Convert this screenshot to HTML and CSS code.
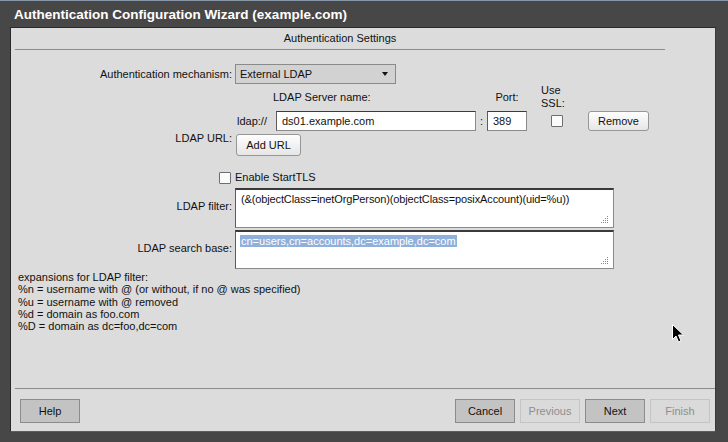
FILE: index.html
```html
<!DOCTYPE html>
<html>
<head>
<meta charset="utf-8">
<link rel="stylesheet" href="styles.css">
</head>
<body>
<div class="window">
  <div class="titlebar">Authentication Configuration Wizard (example.com)</div>
  <div class="panel">
    <div class="section-title">Authentication Settings</div>
    <div class="form">
      <div class="lbl">Authentication mechanism:</div>
      <div class="select"><span>External LDAP</span><span class="arrow"></span></div>

      <div class="lbl lbl-url">LDAP URL:</div>
      <div class="url-block">
        <div class="url-grid">
          <div class="h-server">LDAP Server name:</div>
          <div class="h-port">Port:</div>
          <div class="h-ssl">Use<br>SSL:</div>
          <div class="proto">ldap://</div>
          <div class="input host">ds01.example.com</div>
          <div class="colon">:</div>
          <div class="input port">389</div>
          <div class="cb ssl-cb"></div>
          <button class="btn-light remove">Remove</button>
        </div>
        <button class="btn-light add">Add URL</button>
      </div>

      <div class="tls-cell"><span class="cb"></span></div>
      <div class="tls-text">Enable StartTLS</div>

      <div class="lbl">LDAP filter:</div>
      <div class="textarea filter">(&amp;(objectClass=inetOrgPerson)(objectClass=posixAccount)(uid=%u))<svg class="grip" width="8" height="8" viewBox="0 0 8 8"><rect x="6" y="0" width="1" height="1"/><rect x="4" y="2" width="1" height="1"/><rect x="6" y="2" width="1" height="1"/><rect x="2" y="4" width="1" height="1"/><rect x="4" y="4" width="1" height="1"/><rect x="6" y="4" width="1" height="1"/><rect x="0" y="6" width="1" height="1"/><rect x="2" y="6" width="1" height="1"/><rect x="4" y="6" width="1" height="1"/><rect x="6" y="6" width="1" height="1"/></svg></div>

      <div class="lbl">LDAP search base:</div>
      <div class="textarea base"><span class="sel">cn=users,cn=accounts,dc=example,dc=com</span><svg class="grip" width="8" height="8" viewBox="0 0 8 8"><rect x="6" y="0" width="1" height="1"/><rect x="4" y="2" width="1" height="1"/><rect x="6" y="2" width="1" height="1"/><rect x="2" y="4" width="1" height="1"/><rect x="4" y="4" width="1" height="1"/><rect x="6" y="4" width="1" height="1"/><rect x="0" y="6" width="1" height="1"/><rect x="2" y="6" width="1" height="1"/><rect x="4" y="6" width="1" height="1"/><rect x="6" y="6" width="1" height="1"/></svg></div>
    </div>

    <div class="help">
      <div>expansions for LDAP filter:</div>
      <div>%n = username with @ (or without, if no @ was specified)</div>
      <div>%u = username with @ removed</div>
      <div>%d = domain as foo.com</div>
      <div>%D = domain as dc=foo,dc=com</div>
    </div>

    <div class="footer">
      <button class="btn">Help</button>
      <div class="nav">
        <button class="btn">Cancel</button>
        <button class="btn disabled">Previous</button>
        <button class="btn">Next</button>
        <button class="btn disabled">Finish</button>
      </div>
    </div>
  </div>
</div>
<svg class="cursor" width="14" height="20" viewBox="0 0 14 20">
  <path d="M0.5 0.5 L0.5 15.5 L4 12 L6.5 18 L9 17 L6.5 11 L11.5 11 Z" fill="#000" stroke="#fff" stroke-width="1"/>
</svg>
</body>
</html>
```

FILE: styles.css
```css
* { box-sizing: border-box; }

body {
  margin: 0;
  width: 728px;
  height: 442px;
  overflow: hidden;
  background: #474747;
  font-family: "Liberation Sans", Arial, sans-serif;
  font-size: 11px;
  color: #111;
  position: relative;
}

.window {
  height: 442px;
  border-top: 1px solid #8797a8;
  display: flex;
  flex-direction: column;
}

.titlebar {
  height: 26px;
  padding: 2px 0 0 14px;
  line-height: 24px;
  color: #fff;
  font-weight: bold;
  font-size: 13.5px;
}

.panel {
  flex: 1;
  margin: 0 12px 10px 10px;
  background: #dcdcdc;
  border: 1px solid;
  border-color: #2a2a2a #3a3a3a #5e5e5e #2a2a2a;
  display: flex;
  flex-direction: column;
}

.section-title {
  width: 650px;
  margin-left: 4px;
  text-align: center;
  padding: 4px 0 4px;
  line-height: 13px;
  border-bottom: 1px solid #8c8c8c;
}

.form {
  display: grid;
  grid-template-columns: 217px 379px;
  column-gap: 3px;
  margin: 14px 0 0 4px;
}

.lbl {
  text-align: right;
  align-self: center;
  line-height: 13px;
}

.lbl-url {
  align-self: end;
  margin-bottom: 11px;
}

.select {
  width: 161px;
  height: 20px;
  background: #d2d2d2;
  border: 1px solid #8a8a8a;
  display: flex;
  align-items: center;
  justify-content: space-between;
  padding: 0 7px 0 4px;
}

.arrow {
  width: 0;
  height: 0;
  border-left: 3.5px solid transparent;
  border-right: 3.5px solid transparent;
  border-top: 4px solid #111;
}

.url-grid {
  display: grid;
  grid-template-columns: 41px 200px 11px 40px 60px 62px;
  grid-template-rows: 26px 20px;
  row-gap: 1px;
  line-height: 13px;
}

.h-server { grid-column: 2; grid-row: 1; align-self: center; margin-left: -3px; }
.h-port { grid-column: 4; grid-row: 1; align-self: center; text-align: center; }
.h-ssl { grid-column: 5; grid-row: 1; align-self: center; padding-left: 14px; }

.proto { grid-column: 1; grid-row: 2; align-self: center; padding-left: 2px; }
.host { grid-column: 2; grid-row: 2; }
.colon { grid-column: 3; grid-row: 2; align-self: center; text-align: center; }
.port { grid-column: 4; grid-row: 2; }
.ssl-cb { grid-column: 5; grid-row: 2; align-self: center; margin-left: 24px; }
.remove { grid-column: 6; grid-row: 2; margin-left: 1px; width: 61px; }

.input {
  height: 20px;
  background: #fff;
  border: 1px solid #8a8a8a;
  border-top-color: #3c3c3c;
  border-left-color: #5c5c5c;
  padding: 0 5px;
  line-height: 18px;
}

.cb {
  display: block;
  width: 12px;
  height: 12px;
  background: #fbfbfb;
  border: 1px solid #6e6e6e;
  border-radius: 1px;
}

.btn-light {
  height: 20px;
  font: inherit;
  color: #111;
  background: linear-gradient(#fefefe, #e6e6e6);
  border: 1px solid #979797;
  border-radius: 3px;
  padding: 0;
}

.add {
  display: block;
  width: 65px;
  height: 22px;
  margin: 3px 0 0 1px;
}

.tls-cell {
  margin-top: 14px;
  height: 14px;
  display: flex;
  justify-content: flex-end;
  align-items: flex-end;
  padding-right: 1px;
}

.tls-text {
  margin-top: 14px;
  height: 14px;
  line-height: 14px;
}

.textarea {
  position: relative;
  background: #fff;
  border: 1px solid #8a8a8a;
  border-top: 2px solid #3a3a3a;
  border-left-color: #5a5a5a;
  padding: 2px 5px;
  line-height: 14px;
}

.filter { height: 40px; margin-top: 4px; letter-spacing: -0.13px; }
.base { height: 39px; margin-top: 2px; padding-left: 4px; }

.sel {
  background: #8fb0da;
  color: #fff;
  padding: 0 1px;
}

.grip {
  position: absolute;
  right: 4px;
  bottom: 3px;
  fill: #8a8a8a;
}

.help {
  padding-left: 7px;
  margin-top: 2px;
  line-height: 12.25px;
}

.footer {
  margin: auto 0 0 4px;
  border-top: 1px solid #8c8c8c;
  padding: 10px 5px 8px 5px;
  display: flex;
}

.nav {
  margin-left: auto;
  display: flex;
  gap: 5px;
}

.btn {
  width: 60px;
  height: 24px;
  font: inherit;
  color: #111;
  background: #c3c3c3;
  border: 1px solid #8c8c8c;
  padding: 0;
}

.btn.disabled {
  background: #dadada;
  border-color: #c4c4c4;
  color: #8e8e8e;
}

.cursor {
  position: absolute;
  left: 672px;
  top: 324px;
}
```
